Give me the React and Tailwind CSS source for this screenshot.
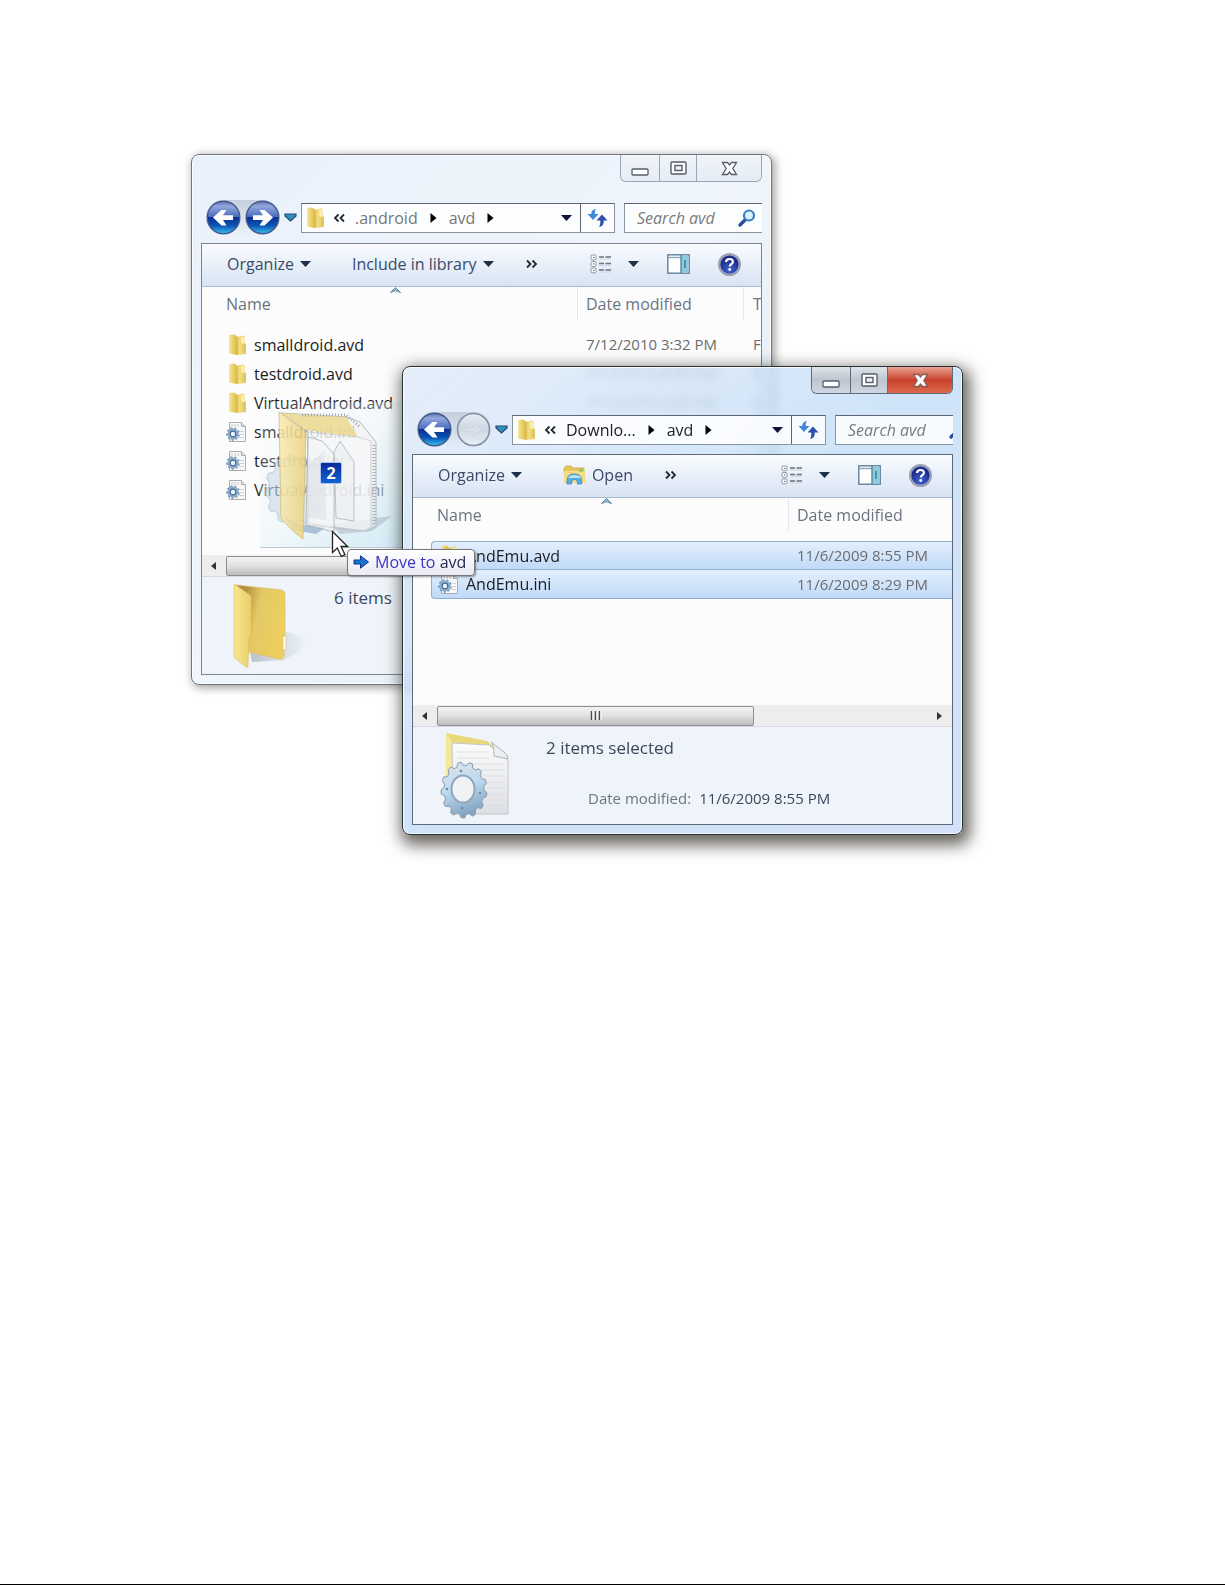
import React from "react";

function gearPath(cx, cy, rx, ry, teeth, depth) {
  const pts = [];
  for (let i = 0; i < teeth; i++) {
    const base = (i / teeth) * Math.PI * 2;
    const step = (Math.PI * 2) / teeth;
    [
      [0, 1 - depth],
      [0.2, 1],
      [0.5, 1],
      [0.7, 1 - depth],
    ].forEach(([t, r]) => {
      const a = base + t * step;
      pts.push(`${(cx + Math.cos(a) * rx * r).toFixed(1)},${(cy + Math.sin(a) * ry * r).toFixed(1)}`);
    });
  }
  return `M${pts.join("L")}Z`;
}

function FolderIcon() {
  return (
    <svg width="19" height="22" viewBox="0 0 19 22" className="shrink-0" aria-hidden="true">
      <defs>
        <linearGradient id="fl" x1="0" x2="1"><stop offset="0" stopColor="#f7e795" /><stop offset="1" stopColor="#d8b43c" /></linearGradient>
        <linearGradient id="fr" x1="0" x2="1"><stop offset="0" stopColor="#c9a535" /><stop offset=".3" stopColor="#f3dd80" /><stop offset="1" stopColor="#e6c95c" /></linearGradient>
      </defs>
      <path d="M8 3 15 1.500q1.500 0 1.500 1.500v6l1.500 1v10l-10 1z" fill="url(#fr)" />
      <path d="M1 1 6 .5q3 1 3 3V13l1 2-1 6-8-1.500z" fill="url(#fl)" />
      <path d="M15.500 11h2v7h-2z" fill="#d9c26a" />
      <path d="M13 3v6l3 1V2.500z" fill="#f9efb4" />
    </svg>
  );
}

function IniIcon() {
  return (
    <svg width="21" height="22" viewBox="0 0 21 22" className="shrink-0" aria-hidden="true">
      <path d="M3.500 1.500h12l4 4v15h-16z" fill="#f8f8f8" stroke="#a9adb3" />
      <path d="M15.500 1.500v4h4" fill="#dde1e6" stroke="#a9adb3" />
      <path d="M6 3v3M9 3v3M12 3v3" stroke="#c2c7cd" />
      <path d="M13 10.500h5M14 13.500h4M12 16.500h6" stroke="#cfd4da" />
      <path d={gearPath(7, 13, 6.5, 6.5, 9, 0.25)} fill="#8fb3d0" stroke="#5f83a6" strokeWidth=".6" />
      <circle cx="7" cy="13" r="2.800" fill="#eef5fb" stroke="#436b92" strokeWidth="1.200" />
    </svg>
  );
}

function Caret({ className = "text-[#1e2f4a]" }) {
  return (
    <svg width="11" height="6" viewBox="0 0 11 6" className={`shrink-0 ${className}`} aria-hidden="true">
      <path d="M0 0h11L5.500 6z" fill="currentColor" />
    </svg>
  );
}

function Crumb() {
  return (
    <svg width="7" height="12" viewBox="0 0 7 12" className="shrink-0" aria-hidden="true">
      <path d="M.5 1 6.500 6l-6 5z" fill="#000" />
    </svg>
  );
}

function Chevrons({ flip }) {
  return (
    <svg width="12" height="10" viewBox="0 0 12 10" className="shrink-0" aria-hidden="true">
      <path
        d={flip ? "M5.500 1.500 2 5l3.500 3.500M11 1.500 7.500 5 11 8.500" : "M1 1.500 4.500 5 1 8.500M6.500 1.500 10 5 6.500 8.500"}
        fill="none" stroke="#22282f" strokeWidth="1.800"
      />
    </svg>
  );
}

function NavButtons({ forward }) {
  return (
    <div className="flex items-center gap-1 rounded-full bg-linear-to-b from-[#c5d0dc] to-transparent">
      <button aria-label="Back" className="block size-[35px]"><Orb /></button>
      <button aria-label="Forward" className="block size-[35px]">
        {forward ? <Orb right /> : (
          <svg viewBox="0 0 35 35" className="size-full" aria-hidden="true">
            <defs><linearGradient id="off" x2="0" y2="1"><stop offset="0" stopColor="#e6ebf1" /><stop offset=".5" stopColor="#ced8e3" /><stop offset="1" stopColor="#e8f0f8" /></linearGradient></defs>
            <circle cx="17.500" cy="17.500" r="16" fill="url(#off)" stroke="#8391a1" strokeWidth="1.600" />
            <path d="M9 15.500h8v-5l9 7-9 7v-5H9z" fill="#d8e0e9" stroke="#cbd5df" strokeWidth=".8" />
          </svg>
        )}
      </button>
    </div>
  );
}

function Orb({ right }) {
  return (
    <svg viewBox="0 0 35 35" className="size-full" aria-hidden="true">
      <defs>
        <linearGradient id="orb" x2="0" y2="1">
          <stop offset="0" stopColor="#5b6fae" /><stop offset=".15" stopColor="#93a8dc" /><stop offset=".48" stopColor="#4a6cbd" />
          <stop offset=".5" stopColor="#0b2f92" /><stop offset=".75" stopColor="#0a54b4" /><stop offset="1" stopColor="#38c6f2" />
        </linearGradient>
      </defs>
      <circle cx="17.500" cy="17.500" r="16.300" fill="url(#orb)" stroke="#46598c" strokeWidth="1.400" />
      <path
        d={right
          ? "M8 15.300h10l-3.500-5.300h5L28 17.500l-8.500 8h-5l3.500-5.500H8z"
          : "M27 15.300H17l3.500-5.300h-5L7 17.500l8.500 8h5L17 20h10z"}
        fill="#fff"
      />
    </svg>
  );
}

function RefreshIcon() {
  return (
    <svg width="21" height="20" viewBox="0 0 21 20" aria-hidden="true">
      <path d="M9 1C5.500 1.500 4.300 3.500 4.300 6H.5L6 12l5.500-6H7.800C7.800 3.800 8 2.200 9 1z" fill="#3f86dc" />
      <path d="M12 19c3.500-.5 5-3 4.700-6.500H20.500L15 6.500l-5.500 6h3.800c.2 3-.2 5-1.300 6.500z" fill="#2c50ae" />
    </svg>
  );
}

function ViewIcon() {
  return (
    <svg width="22" height="20" viewBox="0 0 22 20" aria-hidden="true">
      {[1, 7.5, 14].map((y) => (
        <g key={y}>
          <rect x="1" y={y} width="5" height="4.800" rx="1" fill="#fff" stroke="#9097a3" />
          <path d={`M3 ${y + 2.4}h1.500`} stroke="#5a6472" />
          <path d={`M9 ${y + 2}h5M15.500 ${y + 2}h5.500`} stroke="#69727f" strokeWidth="1.400" />
          <path d={`M9 ${y + 4}h12`} stroke="#c9d0db" strokeWidth=".8" />
        </g>
      ))}
    </svg>
  );
}

function PaneIcon() {
  return (
    <svg width="23" height="20" viewBox="0 0 23 20" aria-hidden="true">
      <rect x=".8" y=".8" width="21.400" height="18.400" fill="#fff" stroke="#5d8096" strokeWidth="1.400" />
      <path d="M1.500 3.500h13" stroke="#8da8b8" strokeWidth="1.500" />
      <path d="M14 1.500h7.500v17H14z" fill="#8ccbe0" />
      <path d="M14 1v18" stroke="#4f7d94" strokeWidth="1.300" />
      <path d="M18 6v8" stroke="#3c7d96" strokeWidth="1.500" />
    </svg>
  );
}

function HelpIcon() {
  return (
    <svg width="23" height="23" viewBox="0 0 23 23" aria-hidden="true">
      <defs><radialGradient id="help" cy=".75"><stop offset="0" stopColor="#3f67d8" /><stop offset="1" stopColor="#1d2d8c" /></radialGradient></defs>
      <circle cx="11.500" cy="11.500" r="10.300" fill="url(#help)" stroke="#9a9fb4" strokeWidth="2.400" />
      <path d="M8 9c.2-4 7-4 6.900-.1-.1 2.300-3.100 2.300-3.100 4.600" fill="none" stroke="#fff" strokeWidth="2.200" />
      <circle cx="11.700" cy="16.500" r="1.400" fill="#fff" />
    </svg>
  );
}

function OpenIcon() {
  return (
    <svg width="23" height="21" viewBox="0 0 23 21" aria-hidden="true">
      <path d="M1 3 3 1h5l2 2h11v5H1z" fill="#e7c45c" stroke="#cda645" strokeWidth=".8" />
      <path d="M1 6h21v12H1z" fill="#f4dc85" />
      <path d="M4 19c-.5-8 2-10 7.500-10S19 12 18.700 19h-4.200c0-3-.8-4.500-3-4.500S8.500 16 8.300 19z" fill="#55aee2" stroke="#3b84c4" strokeWidth=".8" />
      <path d="M16 3.500h3.500V7H16z" fill="#8fcf6a" />
      <path d="M5 13c.8-2 3-3 6.500-3s5.700 1 6.500 3z" fill="#b9e2f7" />
    </svg>
  );
}

function CaptionButtons({ active }) {
  const plain = active
    ? "bg-linear-to-b from-[#dfe4ea] via-[#bcc5d0] via-50% to-[#cfd8e2]"
    : "bg-linear-to-b from-[#f1f5fa] to-[#e4ecf5]";
  const line = active ? "border-[#5f6b7a]" : "border-[#9aa6b4]";
  return (
    <div className={`flex h-[27px] w-[142px] overflow-hidden rounded-b-md border border-t-0 ${line}`}>
      <button aria-label="Minimize" className={`flex w-[38px] items-end justify-center pb-[5px] ${plain}`}>
        <svg width="18" height="8" viewBox="0 0 18 8" aria-hidden="true"><rect x="1" y="1" width="16" height="6" rx="1" fill="#fff" stroke="#555d68" strokeWidth="1.300" /></svg>
      </button>
      <button aria-label="Maximize" className={`flex w-[38px] items-center justify-center border-x ${line} ${plain}`}>
        <svg width="17" height="14" viewBox="0 0 17 14" aria-hidden="true">
          <rect x="1" y="1" width="15" height="12" rx="1" fill="#fff" stroke="#555d68" strokeWidth="1.400" />
          <rect x="5" y="4.500" width="7" height="5" fill="#eef2f7" stroke="#555d68" strokeWidth="1.400" />
        </svg>
      </button>
      <button
        aria-label="Close"
        className={`flex grow items-center justify-center ${active ? "bg-linear-to-b from-[#e9a294] via-[#c8402a] via-50% to-[#dd6a4c]" : plain}`}
      >
        <svg width="17" height="15" viewBox="0 0 17 15" aria-hidden="true">
          <path d="M1.500 1.500h5l2 2.500 2-2.500h5l-3.700 6 3.700 6h-5l-2-2.500-2 2.500h-5l3.700-6z" fill="#fff" stroke={active ? "#8c5a55" : "#555d68"} strokeWidth="1.300" />
        </svg>
      </button>
    </div>
  );
}

function AddressRow({ parent, inactive, forward }) {
  const tone = inactive ? "text-[#777]" : "text-[#222]";
  return (
    <div className="flex items-center overflow-hidden pl-[5px]">
      <NavButtons forward={forward} />
      <button aria-label="Recent locations" className="px-1 py-1">
        <svg width="13" height="9" viewBox="0 0 13 9" aria-hidden="true"><path d="M1 1h11v2L6.500 8 1 3z" fill="#3191b8" stroke="#264b78" strokeWidth="1.200" /></svg>
      </button>
      <div className={`flex h-[30px] w-[314px] shrink-0 items-center border border-[#8b959f] border-t-[#5d6670] bg-white/85 text-base ${tone}`}>
        <div className="flex grow items-center pl-1">
          <FolderIcon />
          <span className="mr-[10px] ml-2"><Chevrons flip /></span>
          <span>{parent}</span>
          <span className="mx-3"><Crumb /></span>
          <span>avd</span>
          <span className="mx-3"><Crumb /></span>
        </div>
        <button aria-label="Previous locations" className="p-2"><Caret className="text-[#11113f]" /></button>
        <button aria-label="Refresh" className="flex h-full w-[34px] items-center justify-center border-l border-[#5d6670]"><RefreshIcon /></button>
      </div>
      <label className="ml-[9px] flex h-[30px] w-[150px] shrink-0 items-center border border-[#8b959f] border-t-[#5d6670] bg-white/85 pl-3">
        <input type="search" aria-label="Search avd" placeholder="Search avd" className="w-[101px] bg-transparent text-base italic outline-none placeholder:text-[#7b7b7b]" />
        <svg width="18" height="18" viewBox="0 0 18 18" aria-hidden="true">
          <path d="M2 16l6-6" stroke="#2a4a9a" strokeWidth="3.200" strokeLinecap="round" />
          <circle cx="11" cy="6.500" r="5" fill="#d9f1fb" stroke="#3a7fc6" strokeWidth="2.200" />
        </svg>
      </label>
    </div>
  );
}

function Toolbar({ children }) {
  return (
    <div className="flex h-[43px] items-center border-b border-[#a9bacf] bg-linear-to-b from-[#fafcfe] via-[#e8eff9] via-50% to-[#d8e4f3] pr-[20px] pb-[2px] pl-[25px] text-base text-[#3a4a68]">
      <button className="flex items-center gap-[6px]">Organize <Caret /></button>
      {children}
      <button aria-label="Change your view" className="mr-4 ml-auto"><ViewIcon /></button>
      <button aria-label="More view options"><Caret /></button>
      <button aria-label="Preview pane" className="mx-7"><PaneIcon /></button>
      <button aria-label="Help"><HelpIcon /></button>
    </div>
  );
}

function FileTable({ rows, hasType, selected }) {
  const th = "h-[34px] p-0 text-left align-middle font-normal text-[#6b7480]";
  return (
    <table className="ml-[18px] w-full table-fixed border-separate border-spacing-0 text-base whitespace-nowrap">
      <colgroup>
        <col className="w-[357px]" />
        <col className="w-[166px]" />
        <col />
      </colgroup>
      <thead>
        <tr>
          <th className={`${th} relative pl-[6px]`}>
            Name
            <svg width="11" height="6" viewBox="0 0 11 6" className="absolute top-0 left-[170px]" aria-hidden="true"><path d="M.5 5.500 5.500.5l5 5-5-2z" fill="#8cbcd4" stroke="#5d86a0" /></svg>
          </th>
          <th className={`${th} border-l border-[#e2e9f2] pl-2`}>Date modified</th>
          <th className={`${th} ${hasType ? "border-l border-[#e2e9f2]" : ""} pl-[9px]`}>{hasType ? "Type" : ""}</th>
        </tr>
        <tr aria-hidden="true"><td className="h-[9px] p-0" colSpan={3} /></tr>
      </thead>
      <tbody>
        {rows.map((r) => {
          const cell = selected
            ? "h-[29px] border-b border-[#8fb0d3] bg-linear-to-b from-[#e3effd] to-[#c0daf8] p-0"
            : "h-[29px] p-0";
          return (
            <tr key={r.name} className="group">
              <td className={`${cell} ${selected ? "border-l group-first:rounded-tl group-first:border-t group-last:rounded-bl" : ""}`}>
                <div className={`flex items-center gap-[7px] leading-[22px] text-[#1c1c1c] ${r.dir ? "pl-2" : "pl-[6px]"}`}>
                  {r.dir ? <FolderIcon /> : <IniIcon />}
                  {r.name}
                </div>
              </td>
              <td className={`${cell} pl-[9px] text-[15px] text-[#6c6c6c] ${selected ? "group-first:border-t" : ""}`}>{r.date}</td>
              <td className={`${cell} pl-[10px] text-[15px] text-[#6c6c6c] ${selected ? "group-first:border-t" : ""}`}>{r.type}</td>
            </tr>
          );
        })}
      </tbody>
    </table>
  );
}

function ScrollBar({ grip }) {
  return (
    <div className="flex h-[22px] items-center border-b border-[#d3dae2] bg-[#ededed]">
      <button aria-label="Scroll left" className="flex w-[24px] justify-center">
        <svg width="6" height="10" viewBox="0 0 6 10" aria-hidden="true"><path d="M5 1v8L0 5z" fill="#333" /></svg>
      </button>
      <div className="flex h-[20px] w-[317px] items-center justify-center rounded-xs border border-[#8e8e8e] bg-linear-to-b from-[#f3f3f3] via-[#e0e0e0] via-50% to-[#bdbdbd]">
        {grip && (
          <svg width="12" height="9" viewBox="0 0 12 9" aria-hidden="true">
            <path d="M1.500 0v9M5.500 0v9M9.500 0v9" stroke="#4c4c4c" strokeWidth="1.500" />
            <path d="M3 0v9M7 0v9M11 0v9" stroke="#fff" />
          </svg>
        )}
      </div>
      <button aria-label="Scroll right" className="mr-[9px] ml-auto">
        <svg width="6" height="10" viewBox="0 0 6 10" aria-hidden="true"><path d="M0 1v8l5-4z" fill="#333" /></svg>
      </button>
    </div>
  );
}

function BigFolder() {
  return (
    <svg width="78" height="88" viewBox="0 0 78 88" aria-hidden="true">
      <defs>
        <linearGradient id="bf1" x1="0" x2="1"><stop offset="0" stopColor="#f6e692" /><stop offset="1" stopColor="#ebcf68" /></linearGradient>
        <linearGradient id="bf2" x1="0" x2="1" y2=".3"><stop offset=".2" stopColor="#b3903a" /><stop offset=".5" stopColor="#e3c866" /><stop offset="1" stopColor="#edcf5f" /></linearGradient>
        <linearGradient id="bfs" x1="0" x2="1"><stop offset="0" stopColor="#8892a0" stopOpacity=".5" /><stop offset="1" stopColor="#8892a0" stopOpacity="0" /></linearGradient>
      </defs>
      <path d="M50 48 76 58 66 70 52 78 20 80 18 70z" fill="url(#bfs)" />
      <path d="M4 3 50 8Q53 9 53 13v36l-1 24q0 5-5 4L16 70z" fill="url(#bf2)" stroke="#d8bd63" strokeWidth=".6" />
      <path d="M51 54h3v14h-3z" fill="#fff" stroke="#d7c278" strokeWidth=".8" />
      <path d="M2 2 18 13q1 1 1 3v38l-2 2-1 28q0 2-2 1L3 76q-1-1-1-3z" fill="url(#bf1)" stroke="#d9bf65" strokeWidth=".6" />
    </svg>
  );
}

function BigIni() {
  return (
    <svg width="76" height="88" viewBox="0 0 76 88" aria-hidden="true">
      <defs>
        <linearGradient id="gear" x1="0" x2=".3" y2="1"><stop offset="0" stopColor="#dde3e8" /><stop offset=".5" stopColor="#bfdcf0" /><stop offset="1" stopColor="#85a5c2" /></linearGradient>
        <linearGradient id="page" x2="0" y2="1"><stop offset="0" stopColor="#fbfbfb" /><stop offset="1" stopColor="#dedfe4" /></linearGradient>
      </defs>
      <path d="M7 1 20 9v60H6z" fill="#f5e997" />
      <path d="M7 1 48 9l6 5v6L16 14z" fill="#e9d878" />
      <path d="M13 11 50 13l19 15v54H14z" fill="url(#page)" stroke="#c3c6cc" />
      {[20, 26, 32, 38, 44, 50, 56, 62, 68, 74].map((y) => (
        <path key={y} d={`M18 ${y}h${y < 28 ? 32 : 48}`} stroke="#dadce1" strokeWidth=".8" />
      ))}
      <path d="M52 10q3 2 3 14l14 3q0-4-4-7z" fill="#eceef1" stroke="#aeb2ba" />
      <path d={gearPath(25, 58, 23, 28, 13, 0.13)} fill="url(#gear)" stroke="#8b9bab" />
      <ellipse cx="24" cy="57" rx="11.500" ry="13.500" fill="#f1f2f6" stroke="#90a6bb" strokeWidth="2" />
      {[[22, 39], [41, 61], [23, 76], [8, 57]].map(([x, y]) => <circle key={x + y} cx={x} cy={y} r="1.300" fill="#6e8aa4" />)}
    </svg>
  );
}

function DragImage() {
  return (
    <div className="absolute top-[402px] left-[260px] border-b border-[#bcc9cf] bg-linear-to-br from-white/10 via-[#e4f1f8]/40 to-[#c5e5f3]/80">
      <svg width="145" height="145" viewBox="80 82 145 145" className="block" aria-hidden="true">
        <defs>
          <linearGradient id="dy" x1="0" x2="1"><stop offset="0" stopColor="#f8eab0" /><stop offset="1" stopColor="#ecd27c" /></linearGradient>
        </defs>
        <path d={gearPath(115, 170, 30, 36, 13, 0.12)} fill="#bcd0e0" fillOpacity=".45" stroke="#9db4c8" strokeOpacity=".6" />
        <path d="M104 196 118 204 145 208 136 214 112 210z" fill="#7fa0c4" fillOpacity=".6" />
        <path d="M150 204 212 196 192 211 160 214z" fill="#8a97a5" fillOpacity=".35" />
        <path d="M101 93 166 97 180 102 196 122V206L187 211 128 205V112z" fill="#f1f1f1" fillOpacity=".55" stroke="#b5b8bc" />
        <path d="M101 93 166 97 178 117 126 110z" fill="#ecd98e" fillOpacity=".85" />
        <path d="M178 117 191 121V207L184 211 128 203V112z" fill="#fbfbfc" fillOpacity=".45" stroke="#c5c8cc" strokeWidth=".8" />
        <path d="M128 117 142 121 154 134V212L126 205z" fill="#f2f3f5" fillOpacity=".5" stroke="#a9adb2" strokeWidth=".8" />
        <path d="M154 132 160 121 174 142V201L156 198z" fill="#e9ebee" fillOpacity=".5" stroke="#aeb2b7" strokeWidth=".8" />
        <path d="M128 145 145 130 146 200 126 197z" fill="#d8dbdf" fillOpacity=".45" />
        <path d="M194 125V205" stroke="#a5aab0" strokeWidth="3" strokeDasharray="1 2" />
        <path d="M122 95h44l14 12" fill="none" stroke="#a5aab0" strokeWidth="3" strokeDasharray="1 2" />
        <path d="M99 92 126 112 123 219Q110 210 101 198z" fill="url(#dy)" fillOpacity=".85" stroke="#d2bd78" strokeWidth=".8" />
      </svg>
    </div>
  );
}

function Window({ className, active, children, title }) {
  const frame = active
    ? "border-[#26332f] bg-linear-to-br from-[#dfeaf8]/80 via-[#bfdbf7]/75 via-50% to-[#cfdff8]/95 shadow-[3px_6px_16px_4px_rgba(40,35,30,0.7)] backdrop-blur-xs"
    : "border-[#6d7680] bg-linear-to-br from-[#e9f1fb] via-[#eff5fb] via-50% to-[#dfeaf7] shadow-[2px_2px_8px_1px_rgba(70,70,70,0.5)]";
  return (
    <section aria-label={title} className={`absolute rounded-lg border px-[9px] pb-[9px] ring-1 ring-white/80 ring-inset ${frame} ${className}`}>
      {children}
    </section>
  );
}

const androidRows = [
  { name: "smalldroid.avd", dir: true, date: "7/12/2010 3:32 PM", type: "File folder" },
  { name: "testdroid.avd", dir: true, date: "7/12/2010 8:09 PM", type: "File folder" },
  { name: "VirtualAndroid.avd", dir: true, date: "7/12/2010 3:09 PM", type: "File folder" },
  { name: "smalldroid.ini" },
  { name: "testdroid.ini" },
  { name: "VirtualAndroid.ini" },
];

const downloadRows = [
  { name: "AndEmu.avd", dir: true, date: "11/6/2009 8:55 PM" },
  { name: "AndEmu.ini", date: "11/6/2009 8:29 PM" },
];

export default function App() {
  return (
    <main className="relative min-h-screen overflow-hidden border-b border-black bg-white font-['Open_Sans','Noto_Sans',sans-serif]">
      <Window title="avd" className="top-[154px] left-[191px] w-[581px]">
        <div className="flex justify-end"><CaptionButtons /></div>
        <div className="mt-[18px] mb-[8px]"><AddressRow parent=".android" inactive forward /></div>
        <div className="overflow-hidden border border-[#7c858f] bg-[#fcfcfc]">
          <Toolbar>
            <button className="ml-[41px] flex items-center gap-[6px]">Include in library <Caret /></button>
            <button aria-label="More commands" className="ml-8"><Chevrons /></button>
          </Toolbar>
          <div className="h-[268px] overflow-hidden"><FileTable rows={androidRows} hasType /></div>
          <ScrollBar />
          <div className="flex h-[97px] items-start bg-[#eff4fa] pt-[5px] pl-[30px]">
            <BigFolder />
            <p className="ml-6 text-[17px] leading-[32px] text-[#3b475c]">6 items</p>
          </div>
        </div>
      </Window>

      <DragImage />

      <Window title="Downloads avd" active className="top-[366px] left-[402px] w-[561px]">
        <div className="flex justify-end"><CaptionButtons active /></div>
        <div className="mt-[18px] mb-[7px]"><AddressRow parent="Downlo..." /></div>
        <div className="overflow-hidden border border-[#5f6a76] bg-[#fcfcfc]">
          <Toolbar>
            <button className="ml-[41px] flex items-center gap-[6px]"><OpenIcon /> Open</button>
            <button aria-label="More commands" className="ml-8"><Chevrons /></button>
          </Toolbar>
          <div className="h-[207px] overflow-hidden"><FileTable rows={downloadRows} selected /></div>
          <ScrollBar grip />
          <div className="flex h-[97px] items-start bg-[#eff4fa] pt-[5px] pl-[26px]">
            <BigIni />
            <div className="ml-[31px] text-[#3b475c]">
              <p className="text-[17px] leading-[32px]">2 items selected</p>
              <dl className="mt-[18px] ml-[42px] flex gap-2 text-[15px] leading-[32px]">
                <dt className="text-[#6d7585]">Date modified:</dt>
                <dd>11/6/2009 8:55 PM</dd>
              </dl>
            </div>
          </div>
        </div>
      </Window>

      <div className="absolute top-[462px] left-[320px] flex size-[22px] items-center justify-center rounded-xs border border-[#a9c4ec] bg-linear-to-b from-[#0b2a9c] to-[#1463d2] text-base font-bold text-white">2</div>

      <div role="tooltip" className="absolute top-[549px] left-[347px] flex h-[27px] items-center gap-[6px] rounded-sm border border-[#777] bg-linear-to-b from-white to-[#e9eaf2] pr-2 pb-[2px] pl-[5px] text-base text-[#222a55] shadow-[1px_1px_2px_rgba(0,0,0,0.4)]">
        <svg width="16" height="14" viewBox="0 0 16 14" aria-hidden="true">
          <path d="M1 5h6.500V.8L15.500 7 7.500 13.200V9H1z" fill="#1673cf" stroke="#14308f" />
        </svg>
        <span><span className="text-[#3a35c4]">Move to</span> avd</span>
      </div>

      <svg width="18" height="28" viewBox="0 0 18 28" className="absolute top-[530px] left-[331px]" aria-hidden="true">
        <path d="M1.500 1.500v21l4.800-4.500 4 8.500 3.700-1.800-4-8.200h6.500z" fill="#fff" stroke="#222" strokeWidth="1.300" />
      </svg>
    </main>
  );
}
